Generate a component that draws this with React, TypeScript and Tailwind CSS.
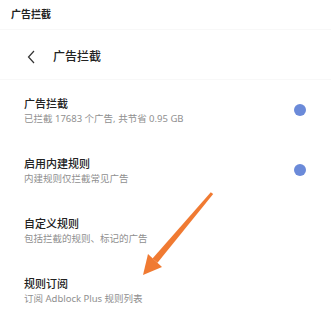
export default function App() {
  const items = [
    { title: '广告拦截', sub: '已拦截 17683 个广告, 共节省 0.95 GB', dot: true },
    { title: '启用内建规则', sub: '内建规则仅拦截常见广告', dot: true },
    { title: '自定义规则', sub: '包括拦截的规则、标记的广告', dot: false },
    { title: '规则订阅', sub: '订阅 Adblock Plus 规则列表', dot: false },
  ];

  return (
    <div
      className="relative w-[331px] h-[320px] overflow-hidden bg-white"
      style={{ fontFamily: '"Noto Sans", "Noto Sans CJK SC", sans-serif' }}
    >
      <div className="h-[30px] flex items-center pl-[11px] border-b border-[#f8f8f8]">
        <span className="text-[10px] font-bold text-[#222]">广告拦截</span>
      </div>

      <div className="h-[50px] flex items-center pt-[4px] pl-[26px] border-b border-[#f8f8f8]">
        <svg width="10" height="14" viewBox="0 0 10 14" className="mr-[17px]">
          <path d="M8 1 L2.5 7 L8 13" fill="none" stroke="#333" strokeWidth="1.2" />
        </svg>
        <span className="text-[12px] font-medium text-[#222]">广告拦截</span>
      </div>

      {items.map((item) => (
        <div key={item.title} className="h-[60px] flex items-center pl-[24px] pr-[25px]">
          <div className="flex-1 flex flex-col pt-[3px]">
            <span className="text-[11px] leading-[14px] font-medium text-[#222]">{item.title}</span>
            <span className="text-[9.5px] leading-[15px] text-[#8f8f8f]">{item.sub}</span>
          </div>
          {item.dot && <div className="w-[12px] h-[12px] rounded-full bg-[#6b8ad9]" />}
        </div>
      ))}

      <svg className="absolute left-0 top-0 pointer-events-none" width="331" height="320">
        <polygon
          points="213.2,194 210.8,192.2 152.5,258.6 157.5,262.8"
          fill="#f07a32"
        />
        <polygon points="143,275 162,267 148,254" fill="#f07a32" />
      </svg>
    </div>
  );
}
